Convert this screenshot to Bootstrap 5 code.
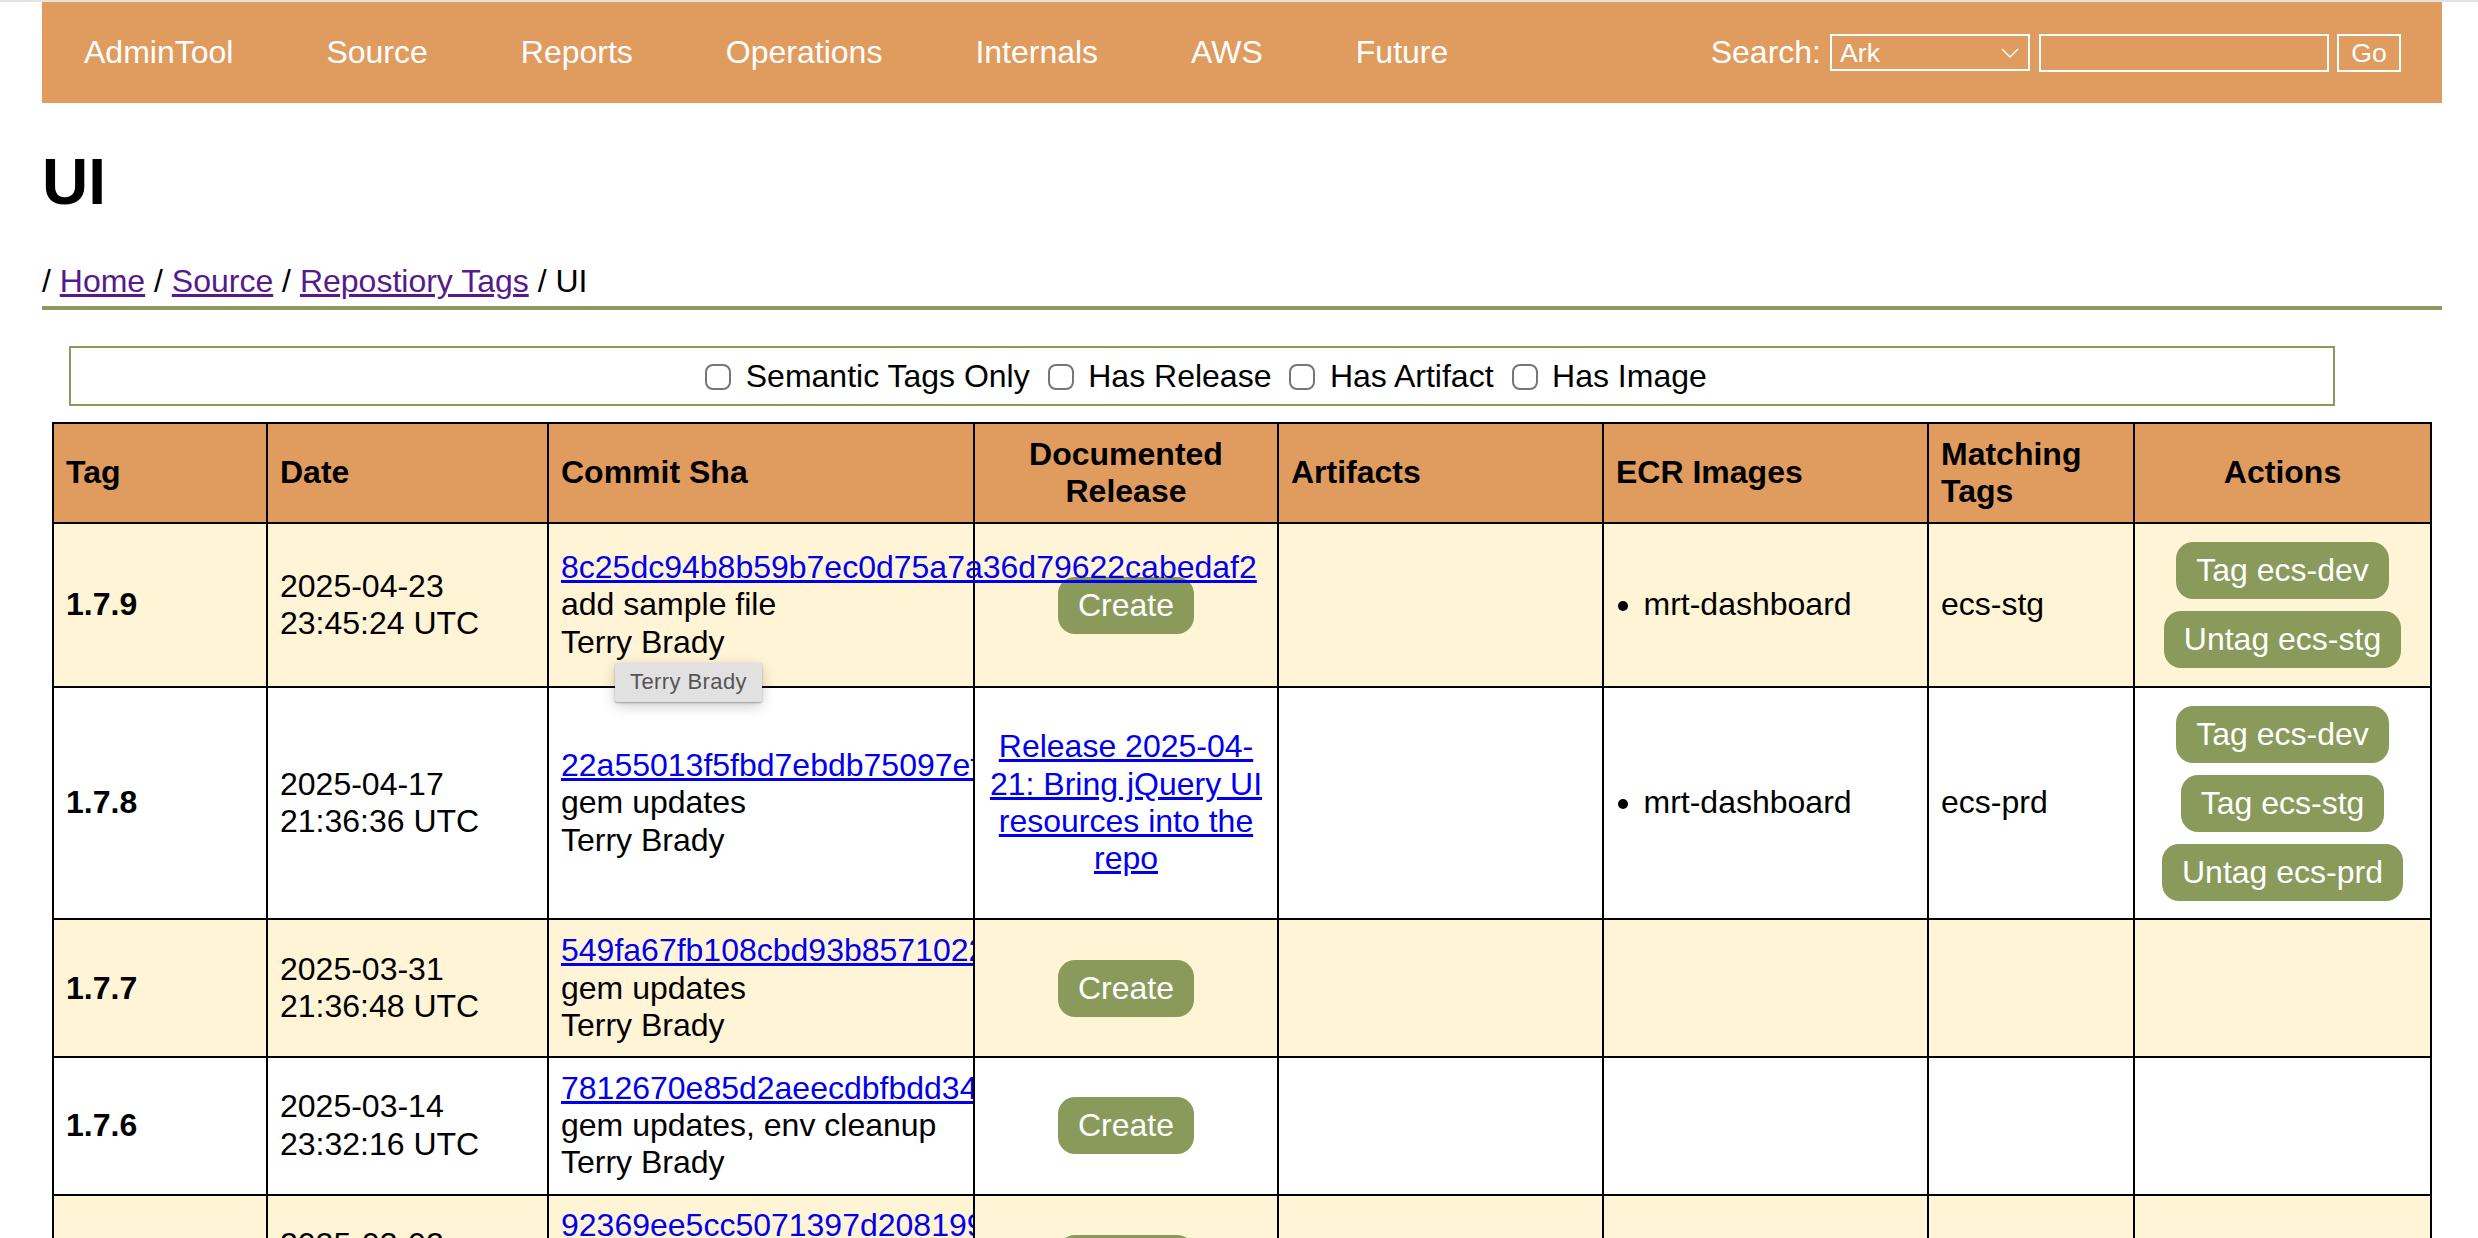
<!DOCTYPE html>
<html lang="en">
<head>
<meta charset="utf-8">
<title>UI</title>
<link href="https://cdn.jsdelivr.net/npm/bootstrap@5.3.0/dist/css/bootstrap.min.css" rel="stylesheet">
<style>
html, body { background: #fff; }
body { font-family: "Liberation Sans", Arial, sans-serif; font-size: 32px; line-height: 37.33px; color: #000; overflow: hidden; }
.chrome-strip { height: 2px; background: #e3e3df; }
.page-wrap { padding: 0 36px 0 42px; }
.top-bar { background: #e09c5f; height: 101px; padding: 0 41px 0 42px; align-items: center; }
.top-bar .navbar-brand, .navbar-expand.top-bar .navbar-nav .nav-link { color: #fff; font-size: 32px; line-height: 37px; padding: 0; margin: 0; }
.top-bar .navbar-brand { margin-right: 93px; }
.top-bar .navbar-nav { gap: 93px; }
.search-form { color: #fff; gap: 9px; align-items: center; }
.search-select { width: 200px; height: 37px; padding: 0 0 0 8px; font-size: 26.67px; line-height: 30px; color: #fff; background-color: transparent; border: 2px solid #fff; border-radius: 0;
  background-image: url("data:image/svg+xml,%3Csvg xmlns='http://www.w3.org/2000/svg' viewBox='0 0 18 10'%3E%3Cpath d='M1 1l8 8 8-8' fill='none' stroke='%23fff' stroke-width='1.4'/%3E%3C/svg%3E");
  background-position: right 9px center; background-size: 18px 10px; }
.search-input { width: 290px; height: 38px; background: transparent; border: 2px solid #fff; border-radius: 0; padding: 0 4px; color: #fff; margin-left: 0; }
.search-go { width: 64px; height: 38px; padding: 0; font-size: 26.67px; line-height: 30px; color: #fff; background: transparent; border: 2px solid #fff; border-radius: 0; margin-left: -1px; }
.page-title { font-size: 64px; line-height: 74px; font-weight: 700; margin: 42px 0 0; }
.crumbs { margin: 44px 0 0; padding-bottom: 6px; line-height: 37px; border-bottom: 4px solid #8a9a5b; }
.crumbs a { color: #551a8b; }
.filter-box { margin: 36px 107px 0 27px; height: 60px; padding: 2px 0 0 8px; border: 2px solid #8a9a5b; gap: 18px; }
.filter-item { gap: 14.5px; }
.filter-check { width: 26px; height: 26px; margin: 0; border: 2px solid #767676; border-radius: 5px; }
.tag-table { table-layout: fixed; width: 2380px; margin: 16px 0 0 10px; border-collapse: collapse; --bs-table-bg: transparent; --bs-table-color: #000; --bs-table-border-color: #000; color: #000; }
.tag-table > :not(caption) > * > * { padding: 11.8px 12px; border: 2px solid #000; vertical-align: middle; line-height: 37.33px; box-shadow: none; }
.tag-table thead th { background: #e09c5f; font-weight: 700; }
.tag-table .cream-row > * { background: #fff4d6; }
.tag-table .sha-cell { overflow: hidden; }
.tag-table .sha-open { overflow: visible; }
.sha-block { position: relative; white-space: nowrap; }
.sha-block a, .rel-link { color: #0000ee; }
.hover-tip { position: absolute; left: 54px; top: 100%; margin-top: 2px; width: 147px; height: 39px; background: #e1e1e1; color: #555; font-size: 22px; line-height: 37px; text-align: center; letter-spacing: .4px; border-radius: 2px; box-shadow: 0 1px 2px rgba(0,0,0,.3), 0 4px 14px rgba(0,0,0,.2); }
.act-btn { --bs-btn-bg: #8a9a5b; --bs-btn-color: #fff; --bs-btn-border-color: #8a9a5b; --bs-btn-hover-bg: #8a9a5b; --bs-btn-hover-color: #fff; font-size: 32px; line-height: 37px; padding: 10px 20px; border: 0; border-radius: 17px; margin: 6px; }
.image-list { margin: 0; padding-left: 27.5px; }
</style>
</head>
<body>
<div class="chrome-strip"></div>
<div class="page-wrap">
  <nav class="navbar navbar-expand top-bar">
    <a class="navbar-brand" href="#">AdminTool</a>
    <ul class="navbar-nav me-auto">
      <li class="nav-item"><a class="nav-link" href="#">Source</a></li>
      <li class="nav-item"><a class="nav-link" href="#">Reports</a></li>
      <li class="nav-item"><a class="nav-link" href="#">Operations</a></li>
      <li class="nav-item"><a class="nav-link" href="#">Internals</a></li>
      <li class="nav-item"><a class="nav-link" href="#">AWS</a></li>
      <li class="nav-item"><a class="nav-link" href="#">Future</a></li>
    </ul>
    <form class="d-flex search-form">
      <span>Search:</span>
      <select class="form-select search-select"><option>Ark</option></select>
      <input class="search-input" type="text" aria-label="Search">
      <button class="btn search-go" type="button">Go</button>
    </form>
  </nav>
  <h1 class="page-title">UI</h1>
  <p class="crumbs">/ <a href="#">Home</a> / <a href="#">Source</a> / <a href="#">Repostiory Tags</a> / UI</p>
  <div class="d-flex justify-content-center align-items-center filter-box">
    <label class="d-flex align-items-center filter-item"><input class="form-check-input filter-check" type="checkbox">Semantic Tags Only</label>
    <label class="d-flex align-items-center filter-item"><input class="form-check-input filter-check" type="checkbox">Has Release</label>
    <label class="d-flex align-items-center filter-item"><input class="form-check-input filter-check" type="checkbox">Has Artifact</label>
    <label class="d-flex align-items-center filter-item"><input class="form-check-input filter-check" type="checkbox">Has Image</label>
  </div>
  <table class="table tag-table">
    <colgroup>
      <col style="width:214px"><col style="width:281px"><col style="width:426px"><col style="width:304px"><col style="width:325px"><col style="width:325px"><col style="width:206px"><col style="width:297px">
    </colgroup>
    <thead>
      <tr><th>Tag</th><th>Date</th><th>Commit Sha</th><th class="text-center">Documented Release</th><th>Artifacts</th><th>ECR Images</th><th>Matching Tags</th><th class="text-center">Actions</th></tr>
    </thead>
    <tbody>
      <tr class="cream-row">
        <td class="fw-bold">1.7.9</td>
        <td>2025-04-23<br>23:45:24 UTC</td>
        <td class="sha-cell sha-open"><div class="sha-block"><a href="#">8c25dc94b8b59b7ec0d75a7a36d79622cabedaf2</a><br>add sample file<br>Terry Brady<div class="hover-tip">Terry Brady</div></div></td>
        <td class="text-center"><a class="btn act-btn" href="#">Create</a></td>
        <td></td>
        <td><ul class="image-list"><li>mrt-dashboard</li></ul></td>
        <td>ecs-stg</td>
        <td><div class="d-flex flex-column align-items-center"><a class="btn act-btn" href="#">Tag ecs-dev</a><a class="btn act-btn" href="#">Untag ecs-stg</a></div></td>
      </tr>
      <tr>
        <td class="fw-bold">1.7.8</td>
        <td>2025-04-17<br>21:36:36 UTC</td>
        <td class="sha-cell"><div class="sha-block"><a href="#">22a55013f5fbd7ebdb75097ef4c1e0a2b6d9f310</a><br>gem updates<br>Terry Brady</div></td>
        <td class="text-center"><a class="rel-link" href="#">Release 2025-04-21: Bring jQuery UI resources into the repo</a></td>
        <td></td>
        <td><ul class="image-list"><li>mrt-dashboard</li></ul></td>
        <td>ecs-prd</td>
        <td><div class="d-flex flex-column align-items-center"><a class="btn act-btn" href="#">Tag ecs-dev</a><a class="btn act-btn" href="#">Tag ecs-stg</a><a class="btn act-btn" href="#">Untag ecs-prd</a></div></td>
      </tr>
      <tr class="cream-row">
        <td class="fw-bold">1.7.7</td>
        <td>2025-03-31<br>21:36:48 UTC</td>
        <td class="sha-cell"><div class="sha-block"><a href="#">549fa67fb108cbd93b8571022d6e4a7c90b1f3e5</a><br>gem updates<br>Terry Brady</div></td>
        <td class="text-center"><a class="btn act-btn" href="#">Create</a></td>
        <td></td><td></td><td></td><td></td>
      </tr>
      <tr>
        <td class="fw-bold">1.7.6</td>
        <td>2025-03-14<br>23:32:16 UTC</td>
        <td class="sha-cell"><div class="sha-block"><a href="#">7812670e85d2aeecdbfbdd34a90c6b1e27f5d083</a><br>gem updates, env cleanup<br>Terry Brady</div></td>
        <td class="text-center"><a class="btn act-btn" href="#">Create</a></td>
        <td></td><td></td><td></td><td></td>
      </tr>
      <tr class="cream-row">
        <td class="fw-bold">1.7.5</td>
        <td>2025-03-02<br>18:20:41 UTC</td>
        <td class="sha-cell"><div class="sha-block"><a href="#">92369ee5cc5071397d20819974ab3e01d6c2f85b</a><br>gem updates<br>Terry Brady</div></td>
        <td class="text-center"><a class="btn act-btn" href="#">Create</a></td>
        <td></td><td></td><td></td><td></td>
      </tr>
    </tbody>
  </table>
</div>
<script src="https://cdn.jsdelivr.net/npm/bootstrap@5.3.0/dist/js/bootstrap.bundle.min.js"></script>
</body>
</html>
